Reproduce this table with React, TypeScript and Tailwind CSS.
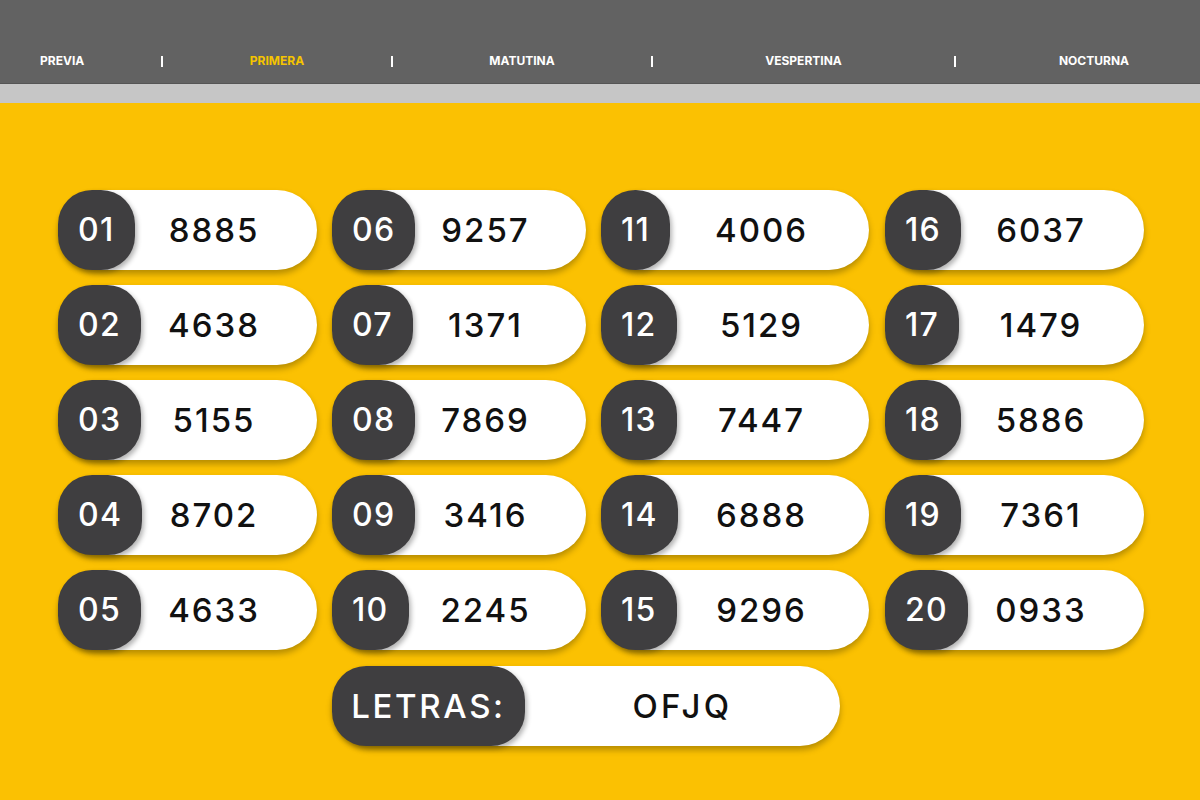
import React from "react";

const cols: { w: string; items: [string, string][] }[] = [
  { w: "w-[259px]", items: [["01", "8885"], ["02", "4638"], ["03", "5155"], ["04", "8702"], ["05", "4633"]] },
  { w: "w-[254px]", items: [["06", "9257"], ["07", "1371"], ["08", "7869"], ["09", "3416"], ["10", "2245"]] },
  { w: "w-[268px]", items: [["11", "4006"], ["12", "5129"], ["13", "7447"], ["14", "6888"], ["15", "9296"]] },
  { w: "w-[259px]", items: [["16", "6037"], ["17", "1479"], ["18", "5886"], ["19", "7361"], ["20", "0933"]] },
];

const font = { fontFamily: "Inter, 'Noto Sans', sans-serif" };

function Pill({ n, v, w }: { n: string; v: string; w: string }) {
  return (
    <div className={`${w} h-[80px] flex items-stretch bg-white rounded-full shadow-[0_4px_6px_rgba(0,0,0,0.28)]`}>
      <div className="w-[85px] flex items-stretch">
        <div className="flex items-center px-5 bg-[#3f3e40] rounded-[34px] shadow-[2px_3px_5px_rgba(0,0,0,0.3)]">
          <span className="text-white text-[32px] font-medium tracking-[0.04em] leading-none">{n}</span>
        </div>
      </div>
      <div className="flex-1 flex items-center justify-center pr-[32px]">
        <span className="text-[#111] text-[33px] font-medium tracking-[0.06em] leading-none">{v}</span>
      </div>
    </div>
  );
}

export default function App() {
  const nav = ["PREVIA", "PRIMERA", "MATUTINA", "VESPERTINA", "NOCTURNA"];
  return (
    <div className="w-[1200px] h-[800px] bg-[#fbc102] flex flex-col overflow-hidden" style={font}>
      <div className="h-[83px] bg-[#626262] flex items-end pb-[16px] text-white text-[12px] font-bold">
        <div className="w-[161px] pl-[40px] leading-none">{nav[0]}</div>
        <div className="w-[2px] h-[11px] bg-white" />
        <div className="w-[228px] text-center text-[#f5c400] leading-none">{nav[1]}</div>
        <div className="w-[2px] h-[11px] bg-white" />
        <div className="w-[258px] text-center leading-none">{nav[2]}</div>
        <div className="w-[2px] h-[11px] bg-white" />
        <div className="w-[301px] text-center leading-none">{nav[3]}</div>
        <div className="w-[2px] h-[11px] bg-white" />
        <div className="flex-1 text-center pl-[32px] leading-none">{nav[4]}</div>
      </div>
      <div className="h-[20px] bg-[#c6c6c6] border-t border-[#555]" />
      <div className="flex flex-col items-start pt-[87px] pl-[58px]">
        <div className="flex gap-[15px]">
          {cols.map((c, i) => (
            <div key={i} className={`flex flex-col gap-[15px] ${i === 3 ? "ml-[1px]" : ""}`}>
              {c.items.map(([n, v]) => (
                <Pill key={n} n={n} v={v} w={c.w} />
              ))}
            </div>
          ))}
        </div>
        <div className="ml-[274px] mt-[16px] w-[508px] h-[80px] flex items-stretch bg-white rounded-full shadow-[0_4px_6px_rgba(0,0,0,0.28)]">
          <div className="w-[193px] flex items-center justify-center bg-[#3f3e40] rounded-[34px] shadow-[2px_3px_5px_rgba(0,0,0,0.3)]">
            <span className="text-white text-[33px] font-medium tracking-[0.08em] leading-none">LETRAS:</span>
          </div>
          <div className="flex-1 flex items-center justify-center">
            <span className="text-[#111] text-[33px] font-medium tracking-[0.1em] leading-none">OFJQ</span>
          </div>
        </div>
      </div>
    </div>
  );
}
